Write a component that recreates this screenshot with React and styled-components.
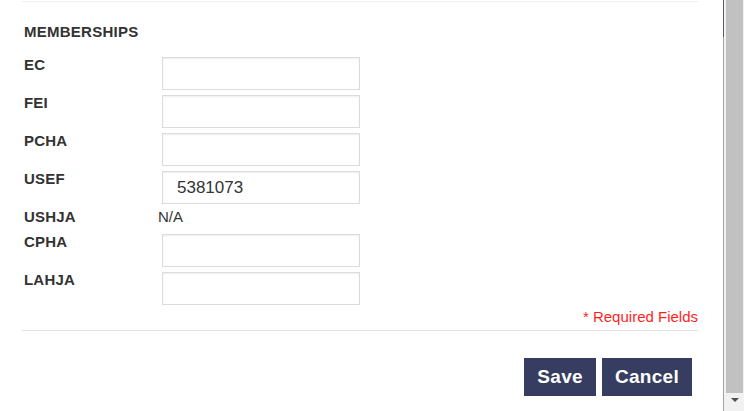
import React from 'react';
import styled, { createGlobalStyle } from 'styled-components';

const GlobalStyle = createGlobalStyle`
  html, body {
    margin: 0;
    padding: 0;
    background: #fff;
    overflow: hidden;
  }
  body {
    font-family: "Liberation Sans", Arial, sans-serif;
    color: #333;
  }
`;

const Frame = styled.div`
  display: flex;
  width: 744px;
  height: 411px;
  overflow: hidden;
`;

const Modal = styled.div`
  width: 723px;
  flex: none;
  padding: 0 25px 0 22px;
  box-sizing: border-box;
`;

const Divider = styled.div`
  height: 1px;
  background: ${({ $tone }) => $tone || '#eaeaea'};
  margin-top: ${({ $top }) => $top || 0}px;
`;

const Section = styled.div`
  padding: 0 2px;
`;

const Heading = styled.div`
  font-size: 15px;
  font-weight: bold;
  line-height: 20px;
  letter-spacing: 0.25px;
  margin: 20px 0 15px;
`;

const Row = styled.div`
  display: flex;
  align-items: flex-start;
  height: ${({ $static }) => ($static ? 20 : 33)}px;
  margin-bottom: 5px;
`;

const Label = styled.div`
  width: 134px;
  flex: none;
  font-size: 15px;
  font-weight: bold;
  line-height: 20px;
  letter-spacing: 0.2px;
  margin-top: -2px;
`;

const Value = styled.div`
  font-size: 15px;
  line-height: 20px;
  margin-top: -2px;
`;

const Input = styled.input`
  width: 198px;
  height: 33px;
  box-sizing: border-box;
  margin: 0 0 0 4px;
  padding: 0 14px;
  border: 1px solid #dcdcdc;
  box-shadow: inset 0 1px 2px rgba(0, 0, 0, 0.07);
  border-radius: 0;
  font-family: "Liberation Sans", Arial, sans-serif;
  font-size: 17px;
  color: #333;
  outline: none;
`;

const Required = styled.div`
  text-align: right;
  color: #ff1f1f;
  font-size: 15px;
  line-height: 20px;
  margin-top: -3px;
`;

const Footer = styled.div`
  display: flex;
  justify-content: flex-end;
  gap: 6px;
  padding: 27px 6px 0 0;
`;

const Button = styled.button`
  height: 38px;
  padding: 0 13px;
  border: none;
  border-radius: 0;
  background: #363d60;
  color: #fff;
  font-family: "Liberation Sans", Arial, sans-serif;
  font-size: 19px;
  font-weight: bold;
  letter-spacing: 0.3px;
  cursor: pointer;
`;

const ScrollEdge = styled.div`
  width: 1px;
  flex: none;
  background: linear-gradient(#5a5a68 0, #5a5a68 37px, #a3a3a3 37px);
`;

const ScrollTrack = styled.div`
  width: 20px;
  flex: none;
  background: #f1f1f1;
  display: flex;
  flex-direction: column;
  padding: 0 1px 0 2px;
  box-sizing: border-box;
`;

const ScrollThumb = styled.div`
  height: 393px;
  background: #c1c1c1;
`;

const ScrollArrow = styled.div`
  align-self: center;
  margin-top: 5px;
  width: 0;
  height: 0;
  border-left: 4px solid transparent;
  border-right: 4px solid transparent;
  border-top: 4px solid #505050;
`;

const fields = [
  { name: 'EC' },
  { name: 'FEI' },
  { name: 'PCHA' },
  { name: 'USEF', value: '5381073' },
  { name: 'USHJA', text: 'N/A' },
  { name: 'CPHA' },
  { name: 'LAHJA' },
];

export default function App() {
  return (
    <>
      <GlobalStyle />
      <Frame>
        <Modal>
          <Divider $top={1} $tone="#eeeeee" />
          <Section>
            <Heading>MEMBERSHIPS</Heading>
            {fields.map((f) => (
              <Row key={f.name} $static={!!f.text}>
                <Label>{f.name}</Label>
                {f.text ? <Value>{f.text}</Value> : <Input defaultValue={f.value || ''} />}
              </Row>
            ))}
          </Section>
          <Required>* Required Fields</Required>
          <Divider $top={3} $tone="#e3e3e3" />
          <Footer>
            <Button>Save</Button>
            <Button>Cancel</Button>
          </Footer>
        </Modal>
        <ScrollEdge />
        <ScrollTrack>
          <ScrollThumb />
          <ScrollArrow />
        </ScrollTrack>
      </Frame>
    </>
  );
}
